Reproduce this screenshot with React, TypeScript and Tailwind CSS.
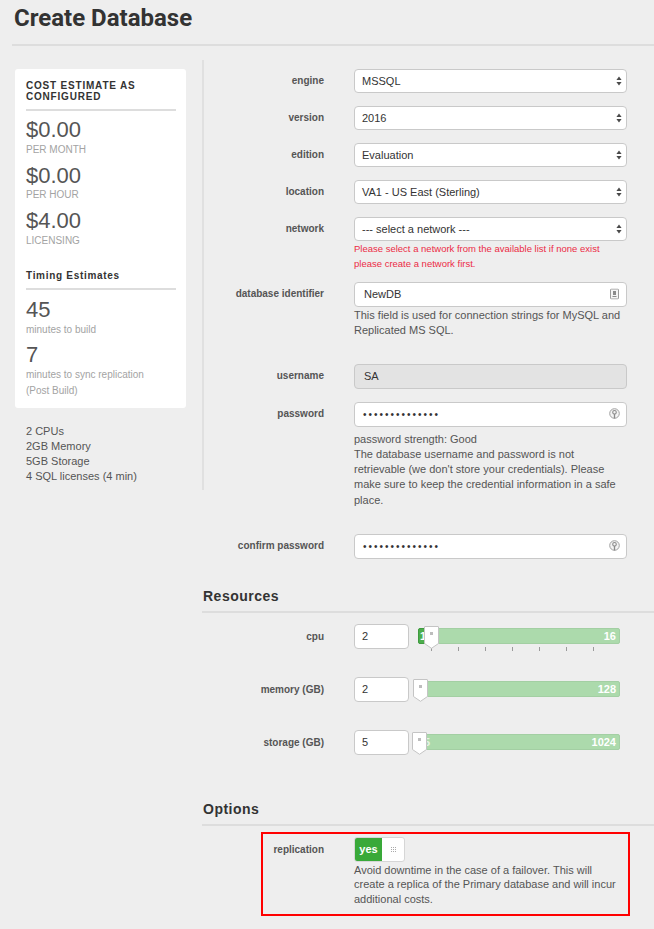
import React from "react";

const Arrows = () => (
  <svg
    className="absolute right-[4px] top-1/2 -translate-y-1/2"
    width="6"
    height="10"
    viewBox="0 0 6 10"
  >
    <path d="M3 0.5L5.6 4H0.4Z M3 9.5L0.4 6H5.6Z" fill="#4a4a4a" />
  </svg>
);

const Select = ({ value }: { value: string }) => (
  <div className="relative flex h-[24px] items-center rounded-[4px] border border-[#c9c9c9] bg-white pl-[7px] text-[11px] text-[#333]">
    {value}
    <Arrows />
  </div>
);

const CardIcon = () => (
  <svg
    className="absolute right-[7px] top-1/2 -translate-y-1/2"
    width="9"
    height="11"
    viewBox="0 0 9 11"
  >
    <rect x="0.5" y="0.5" width="8" height="10" rx="1" fill="#f4f4f4" stroke="#9a9a9a" />
    <rect x="3" y="2.5" width="3" height="4" fill="#8a8a8a" />
    <rect x="2.5" y="7.5" width="4" height="1" fill="#8a8a8a" />
  </svg>
);

const KeyIcon = () => (
  <svg
    className="absolute right-[6px] top-1/2 -translate-y-1/2"
    width="11"
    height="12"
    viewBox="0 0 11 12"
  >
    <circle cx="5.5" cy="5.5" r="4.8" fill="#f3f3f3" stroke="#a0a0a0" />
    <circle cx="5.5" cy="4.3" r="1.8" fill="none" stroke="#8a8a8a" strokeWidth="1.1" />
    <path d="M5.5 6v4.5" stroke="#8a8a8a" strokeWidth="1.3" />
  </svg>
);

const Dots = () => (
  <span className="text-[10px] tracking-[2px] text-[#333]">••••••••••••••</span>
);

function Row({
  label,
  children,
  className = "",
}: {
  label: string;
  children: React.ReactNode;
  className?: string;
}) {
  return (
    <div className={`flex items-start ${className}`}>
      <div className="w-[120px] text-right text-[10px] font-bold leading-[24px] text-[#555]">
        {label}
      </div>
      <div className="ml-[30px] w-[273px]">{children}</div>
    </div>
  );
}

const Handle = ({ left }: { left: number }) => (
  <div className="absolute top-[-3px] h-[23px] w-[15px]" style={{ left }}>
    <svg width="15" height="23" viewBox="0 0 15 23">
      <path
        d="M1 0.5H14a0.5 0.5 0 0 1 .5.5V17.5L7.5 22.3L0.5 17.5V1a0.5 0.5 0 0 1 .5-.5Z"
        fill="#fff"
        stroke="#c4c4c4"
      />
      <rect x="6" y="6" width="3" height="3" fill="#bdbdbd" />
    </svg>
  </div>
);

function Resource({
  label,
  value,
  max,
  handle,
  minLabel,
  ticks,
  className = "",
}: {
  label: string;
  value: string;
  max: string;
  handle: number;
  minLabel?: React.ReactNode;
  ticks?: boolean;
  className?: string;
}) {
  return (
    <div className={`flex items-center ${className}`}>
      <div className="w-[120px] text-right text-[10px] font-bold text-[#555]">{label}</div>
      <div className="ml-[30px] flex h-[25px] w-[55px] items-center rounded-[4px] border border-[#c9c9c9] bg-white pl-[7px] text-[11px] text-[#333]">
        {value}
      </div>
      <div className="relative ml-[9px] h-[16px] w-[202px] rounded-[2px] border border-[#a3cfa3] bg-[#acdaac]">
        {minLabel}
        <span className="absolute right-[3px] top-0 text-[11px] font-bold leading-[14px] text-white">
          {max}
        </span>
        {ticks && (
          <div className="absolute left-[12px] top-[18px] flex gap-[26px]">
            {[0, 1, 2, 3, 4, 5, 6].map((i) => (
              <div key={i} className="h-[4px] w-px bg-[#9a9a9a]" />
            ))}
          </div>
        )}
        <Handle left={handle} />
      </div>
    </div>
  );
}

export default function App() {
  return (
    <div className="min-h-screen bg-[#eeeeee] font-['Liberation_Sans',Arial,sans-serif] text-[#555]">
      <h1 className="pl-[14px] pt-[5px] font-['Roboto',sans-serif] text-[24px] font-bold leading-[26px] text-[#333]">
        Create Database
      </h1>
      <div className="ml-[12px] mt-[13px] h-[2px] bg-[#dddddd]" />

      <div className="mt-[14px] flex items-start">
        {/* cost sidebar */}
        <div className="w-[204px] shrink-0 border-r-2 border-[#e0e0e0] pb-[6px] pl-[15px] pr-[16px] pt-[9px]">
          <div className="rounded-[3px] bg-white pb-[10px] pl-[11px] pr-[10px] pt-[11px]">
            <div className="text-[10px] font-bold uppercase leading-[11px] tracking-[0.8px] text-[#333]">
              Cost Estimate as Configured
            </div>
            <div className="mt-[7px] h-[2px] bg-[#dddddd]" />
            {[
              ["$0.00", "PER MONTH"],
              ["$0.00", "PER HOUR"],
              ["$4.00", "LICENSING"],
            ].map(([price, per], i) => (
              <div key={i} className={i === 0 ? "mt-[7px]" : "mt-[8px]"}>
                <div className="text-[22px] leading-[24px] text-[#555]">{price}</div>
                <div className="mt-[1.5px] text-[10px] leading-[12px] text-[#a3a3a3]">{per}</div>
              </div>
            ))}
            <div className="mt-[23px] text-[10px] font-bold leading-[11px] tracking-[0.7px] text-[#333]">
              Timing Estimates
            </div>
            <div className="mt-[7px] h-[2px] bg-[#dddddd]" />
            <div className="mt-[8px] text-[22px] leading-[24px] text-[#555]">45</div>
            <div className="text-[10px] leading-[15px] text-[#a3a3a3]">minutes to build</div>
            <div className="mt-[6.5px] text-[22px] leading-[24px] text-[#555]">7</div>
            <div className="text-[10px] leading-[15.5px] text-[#a3a3a3]">
              minutes to sync replication
              <br />
              (Post Build)
            </div>
          </div>
          <div className="mt-[15.5px] pl-[11px] text-[11px] leading-[15px] text-[#555]">
            <div>2 CPUs</div>
            <div>2GB Memory</div>
            <div>5GB Storage</div>
            <div>4 SQL licenses (4 min)</div>
          </div>
        </div>

        {/* form */}
        <div className="flex-1 pt-[9px]">
          <Row label="engine">
            <Select value="MSSQL" />
          </Row>
          <Row label="version" className="mt-[13px]">
            <Select value="2016" />
          </Row>
          <Row label="edition" className="mt-[13px]">
            <Select value="Evaluation" />
          </Row>
          <Row label="location" className="mt-[13px]">
            <Select value="VA1 - US East (Sterling)" />
          </Row>
          <Row label="network" className="mt-[13px]">
            <Select value="--- select a network ---" />
            <div className="text-[9.5px] leading-[15px] text-[#ec2b45]">
              Please select a network from the available list if none exist
              <br />
              please create a network first.
            </div>
          </Row>
          <Row label="database identifier" className="mt-[10.5px]">
            <div className="relative flex h-[25px] items-center rounded-[4px] border border-[#c9c9c9] bg-white pl-[9px] text-[11px] text-[#333]">
              NewDB
              <CardIcon />
            </div>
            <div className="mt-[1px] text-[11px] leading-[15px] text-[#555]">
              This field is used for connection strings for MySQL and Replicated MS SQL.
            </div>
          </Row>
          <Row label="username" className="mt-[26px]">
            <div className="flex h-[25px] items-center rounded-[4px] border border-[#c9c9c9] bg-[#e3e3e3] pl-[9px] text-[11px] text-[#333]">
              SA
            </div>
          </Row>
          <Row label="password" className="mt-[13px]">
            <div className="relative flex h-[25px] items-center rounded-[4px] border border-[#c9c9c9] bg-white pl-[8px]">
              <Dots />
              <KeyIcon />
            </div>
            <div className="mt-[5px] text-[11px] leading-[15.25px] text-[#555]">
              password strength: Good
              <br />
              The database username and password is not retrievable (we don't store your
              credentials). Please make sure to keep the credential information in a safe
              place.
            </div>
          </Row>
          <Row label="confirm password" className="mt-[26px]">
            <div className="relative flex h-[25px] items-center rounded-[4px] border border-[#c9c9c9] bg-white pl-[8px]">
              <Dots />
              <KeyIcon />
            </div>
          </Row>

          <h2 className="-ml-[1px] mt-[27px] text-[14px] font-bold leading-[20px] tracking-[0.5px] text-[#333]">
            Resources
          </h2>
          <div className="-ml-[2px] mt-[5px] h-[2px] bg-[#dddddd]" />
          <Resource
            label="cpu"
            value="2"
            max="16"
            handle={5}
            ticks
            className="mt-[11px]"
            minLabel={
              <div className="absolute left-[-1px] top-[-1px] h-[16px] w-[10px] rounded-l-[2px] border border-[#3f9a3f] bg-[#4cae4c] pl-[1px] text-[11px] font-bold leading-[14px] text-white">
                1
              </div>
            }
          />
          <Resource label="memory (GB)" value="2" max="128" handle={-6} className="mt-[28px]" />
          <Resource
            label="storage (GB)"
            value="5"
            max="1024"
            handle={-7}
            className="mt-[28px]"
            minLabel={
              <span className="absolute left-[5px] top-0 text-[11px] font-bold leading-[14px] text-[#e6f3e6]">
                5
              </span>
            }
          />

          <h2 className="-ml-[1px] mt-[44px] text-[14px] font-bold leading-[20px] tracking-[0.5px] text-[#333]">
            Options
          </h2>
          <div className="-ml-[2px] mt-[5px] h-[2px] bg-[#dddddd]" />
          <div className="ml-[57px] mt-[6px] w-[369px] border-2 border-[#ff0000] pb-[8px] pt-[3px]">
            <div className="flex items-start">
              <div className="w-[61px] text-right text-[10px] font-bold leading-[25px] text-[#555]">
                replication
              </div>
              <div className="ml-[30px] w-[273px]">
                <div className="flex h-[25px] w-[51px] overflow-hidden rounded-[3px] border border-[#d6d6d6] bg-white">
                  <div className="flex w-[27px] items-center justify-center bg-[#39a939] text-[11px] font-bold text-white">
                    yes
                  </div>
                  <div className="flex flex-1 items-center justify-center">
                    <div className="grid grid-cols-3 gap-[1px]">
                      {[0, 1, 2, 3, 4, 5, 6, 7, 8].map((i) => (
                        <div key={i} className="h-[1px] w-[1px] bg-[#aaaaaa]" />
                      ))}
                    </div>
                  </div>
                </div>
                <div className="mt-[1px] text-[11px] leading-[14.5px] text-[#555]">
                  Avoid downtime in the case of a failover. This will
                  <br />
                  create a replica of the Primary database and will incur
                  <br />
                  additional costs.
                </div>
              </div>
            </div>
          </div>
        </div>
      </div>
    </div>
  );
}
